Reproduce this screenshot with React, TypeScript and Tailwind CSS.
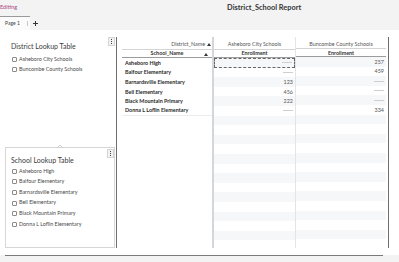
import React from "react";

const DISTRICTS = ["Asheboro City Schools", "Buncombe County Schools"];

const SCHOOLS = [
  { name: "Asheboro High", a: null, b: "257" },
  { name: "Balfour Elementary", a: null, b: "459" },
  { name: "Barnardsville Elementary", a: "123", b: null },
  { name: "Bell Elementary", a: "456", b: null },
  { name: "Black Mountain Primary", a: "222", b: null },
  { name: "Donna L Loflin Elementary", a: null, b: "334" },
];

const ROWS = Array.from({ length: 20 }, (_, i) => i);

function Kebab() {
  return (
    <div className="w-[7px] h-[9px] bg-[#f2f2f2] border border-[#d6d6d6] flex flex-col items-center justify-center gap-[1px]">
      <span className="w-[1px] h-[1px] bg-[#444]" />
      <span className="w-[1px] h-[1px] bg-[#444]" />
      <span className="w-[1px] h-[1px] bg-[#444]" />
    </div>
  );
}

function Check({ label }: { label: string }) {
  return (
    <div className="flex items-center gap-[2px] h-[10.6px]">
      <span className="w-[5px] h-[5px] border border-[#8a8a8a] rounded-[1px] bg-white shrink-0" />
      <span className="text-[5.4px] leading-none text-[#4a4a4a]">{label}</span>
    </div>
  );
}

function Dash() {
  return <span className="inline-block w-[10px] h-px bg-[#cfcfcf]" />;
}

function Arrow() {
  return (
    <svg width="4" height="3" viewBox="0 0 4 3" className="shrink-0">
      <path d="M2 0L4 3H0z" fill="#333" />
    </svg>
  );
}

function DataColumn({
  title,
  values,
  width,
  selectFirst,
}: {
  title: string;
  values: (string | null)[];
  width: string;
  selectFirst?: boolean;
}) {
  return (
    <div className={`${width} flex flex-col shrink-0`}>
      <div className="h-[13px] pt-[3px] flex items-center justify-center border-b border-[#d4d4d4] text-[5.4px] text-[#555]">
        {title}
      </div>
      <div className="h-[8px] flex items-center justify-center border-b border-[#9c9c9c] text-[5.4px] font-bold text-[#333]">
        Enrollment
      </div>
      {ROWS.map((i) => {
        const v = values[i];
        const striped = i % 2 === 0;
        const selected = selectFirst && i === 0;
        return (
          <div
            key={i}
            className={`h-[9.6px] shrink-0 flex items-center justify-end pr-[2px] text-[5.4px] text-[#555] ${
              striped ? "bg-[#f6f7f9]" : "bg-white"
            } ${selected ? "border border-dashed border-[#666]" : ""}`}
          >
            {i < values.length ? v ?? <Dash /> : null}
          </div>
        );
      })}
    </div>
  );
}

export default function App() {
  return (
    <div className="w-[399px] h-[262px] overflow-hidden bg-[#f3f3f3] font-['Lato','Noto_Sans',sans-serif]">
      {/* top bar */}
      <div className="h-[15px] flex items-center">
        <span className="text-[5.6px] text-[#a8457f]">Editing</span>
        <span className="ml-[210px] text-[7.4px] font-bold text-[#333]">District_School Report</span>
      </div>

      {/* page tabs */}
      <div className="h-[15px] flex items-end">
        <div className="w-[30px] h-[14px] bg-[#fbfbfb] border-t border-[#9a9a9a] flex items-center">
          <span className="pl-[5px] text-[5px] text-[#444]">Page 1</span>
          <span className="ml-[7px] w-px h-[5px] bg-[#c8c8c8]" />
        </div>
        <span className="ml-[3px] h-[14px] flex items-center">
          <svg width="5" height="5" viewBox="0 0 5 5">
            <path d="M2.5 0V5M0 2.5H5" stroke="#333" strokeWidth="1" />
          </svg>
        </span>
      </div>

      {/* canvas */}
      <div className="h-[225px] bg-white flex">
        <div className="w-[116px] flex flex-col shrink-0">
          {/* district lookup */}
          <div className="relative h-[117px] pl-[11px] pt-[12px]">
            <div className="absolute top-[7px] right-[1px]">
              <Kebab />
            </div>
            <div className="text-[7px] leading-[9px] text-[#3a3a3a]">District Lookup Table</div>
            <div className="mt-[3px] pl-[1px]">
              {DISTRICTS.map((d) => (
                <Check key={d} label={d} />
              ))}
            </div>
          </div>

          {/* school lookup */}
          <div className="relative ml-[5px] w-[110px] h-[101px] border border-[#d6d6d6] pl-[5px] pt-[8px]">
            <svg width="6" height="3" viewBox="0 0 6 3" className="absolute -top-[3px] left-[51px]">
              <path d="M0 3L3 0L6 3" fill="none" stroke="#c4c4c4" strokeWidth="0.8" />
            </svg>
            <div className="absolute top-[1px] right-0">
              <Kebab />
            </div>
            <div className="text-[7px] leading-[9px] text-[#3a3a3a]">School Lookup Table</div>
            <div className="mt-[1px] pl-[1px]">
              {SCHOOLS.map((s) => (
                <Check key={s.name} label={s.name} />
              ))}
            </div>
          </div>
        </div>

        {/* crosstab */}
        <div className="mt-[7px] h-[211px] w-[273px] border-l-[1.5px] border-r-[1.5px] border-[#6e6e6e] pl-[5px] flex overflow-hidden">
          <div className="w-[92px] flex flex-col shrink-0 border-r-2 border-[#d3d7dc]">
            <div className="h-[13px] pt-[3px] pr-[1px] flex items-center justify-end gap-[2px] border-b border-[#d4d4d4] text-[5.4px] text-[#555]">
              District_Name
              <Arrow />
            </div>
            <div className="relative h-[8px] flex items-center justify-center border-b border-[#9c9c9c] text-[5.4px] font-bold text-[#333]">
              School_Name
              <span className="absolute right-[4px] top-[2.5px]">
                <Arrow />
              </span>
            </div>
            {SCHOOLS.map((s, i) => (
              <div
                key={s.name}
                className={`h-[9.6px] shrink-0 flex items-center pl-[3px] text-[5.4px] font-bold text-[#2a2a2a] ${
                  i === SCHOOLS.length - 1 ? "border-b border-[#ececec]" : ""
                }`}
              >
                {s.name}
              </div>
            ))}
          </div>
          <div className="border-r border-[#e4e4e4]">
            <DataColumn
              title="Asheboro City Schools"
              width="w-[81px]"
              values={SCHOOLS.map((s) => s.a)}
              selectFirst
            />
          </div>
          <DataColumn
            title="Buncombe County Schools"
            width="w-[90px]"
            values={SCHOOLS.map((s) => s.b)}
          />
        </div>
      </div>

      <div className="ml-[5px] w-[378px] h-px bg-[#7a7a7a]" />
    </div>
  );
}
